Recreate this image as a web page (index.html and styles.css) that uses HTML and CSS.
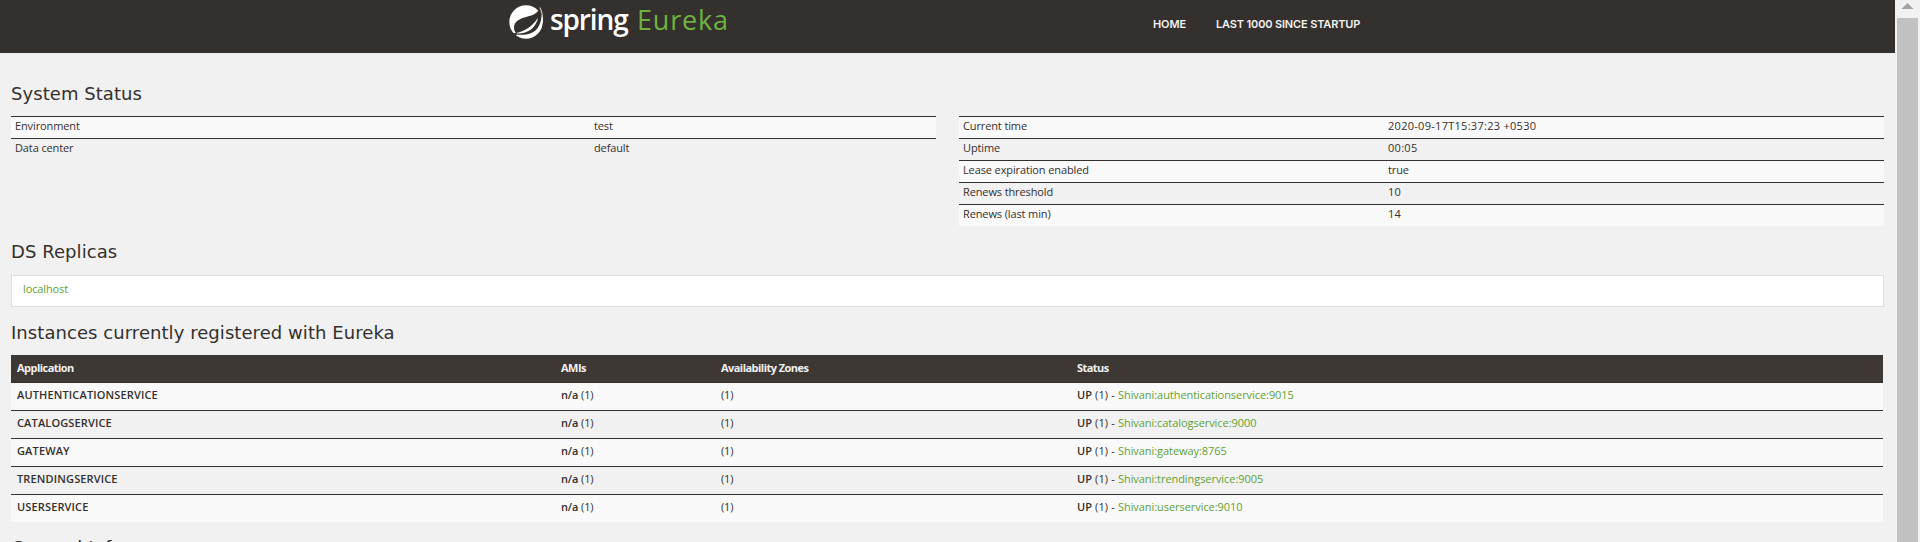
FILE: index.html
```html
<!DOCTYPE html>
<html lang="en">
<head>
<meta charset="utf-8">
<title>Eureka</title>
<link rel="stylesheet" href="styles.css">
</head>
<body>
<div class="page">
  <header class="navbar">
    <a class="brand">
      <svg class="leaf" width="35" height="36" viewBox="0 0 35 36">
        <circle cx="17" cy="17" r="16.700" fill="#fff"/>
        <path fill="#34302d" d="M27 -1H35V5L31.500 5L26.500 2.500Z"/>
        <path fill="#34302d" d="M30.500 3C28.500 8.500 24.500 10.200 18 11.700C10.500 13.500 5 16.500 5 22.500C5 25 5.800 26.600 7 27.800C5.500 27.500 4.300 28.800 5 30C5.800 31 7.300 30.600 7.800 29.600C17 30.600 24.500 28.500 28.500 23.200C33 17 33.300 9.500 31 2Z"/>
        <path fill="#fff" d="M8 27.700C14 26.800 23 22.500 28.800 12.800C28 21 20 29 8 28.600Z"/>
        <path fill="none" stroke="#fff" stroke-width="0.900" d="M30.900 2.500C33.800 9 33.900 14 33.300 18"/>
      </svg>
      <span class="brand-spring">spring</span>
      <span class="brand-eureka">Eureka</span>
    </a>
    <nav class="links"><a>HOME</a><a class="last">LAST 1000 SINCE STARTUP</a></nav>
  </header>
  <main class="content">
    <h1>System Status</h1>
    <div class="status">
      <table class="info env">
        <tr><td class="key">Environment</td><td>test</td></tr>
        <tr><td class="key">Data center</td><td>default</td></tr>
      </table>
      <table class="info runtime">
        <tr><td class="key">Current time</td><td class="num">2020-09-17T15:37:23 +0530</td></tr>
        <tr><td class="key">Uptime</td><td class="num">00:05</td></tr>
        <tr><td class="key">Lease expiration enabled</td><td>true</td></tr>
        <tr><td class="key">Renews threshold</td><td class="num">10</td></tr>
        <tr><td class="key">Renews (last min)</td><td class="num">14</td></tr>
      </table>
    </div>
    <h1>DS Replicas</h1>
    <div class="replicas"><a>localhost</a></div>
    <h1>Instances currently registered with Eureka</h1>
    <table class="apps">
      <thead><tr><th class="c-app">Application</th><th class="c-ami">AMIs</th><th class="c-zone">Availability Zones</th><th>Status</th></tr></thead>
      <tbody>
        <tr><td><b class="name">AUTHENTICATIONSERVICE</b></td><td><b>n/a</b> (1)</td><td>(1)</td><td><span class="up"><b>UP</b> (1) - </span><a>Shivani:authenticationservice:9015</a></td></tr>
        <tr><td><b class="name">CATALOGSERVICE</b></td><td><b>n/a</b> (1)</td><td>(1)</td><td><span class="up"><b>UP</b> (1) - </span><a>Shivani:catalogservice:9000</a></td></tr>
        <tr><td><b class="name">GATEWAY</b></td><td><b>n/a</b> (1)</td><td>(1)</td><td><span class="up"><b>UP</b> (1) - </span><a>Shivani:gateway:8765</a></td></tr>
        <tr><td><b class="name">TRENDINGSERVICE</b></td><td><b>n/a</b> (1)</td><td>(1)</td><td><span class="up"><b>UP</b> (1) - </span><a>Shivani:trendingservice:9005</a></td></tr>
        <tr><td><b class="name">USERSERVICE</b></td><td><b>n/a</b> (1)</td><td>(1)</td><td><span class="up"><b>UP</b> (1) - </span><a>Shivani:userservice:9010</a></td></tr>
      </tbody>
    </table>
    <h1>General Info</h1>
  </main>
</div>
<div class="scrollbar">
  <svg class="arrow" width="21" height="18" viewBox="0 0 21 18"><path fill="#a3a3a3" d="M10.500 3L16.500 9H4.500Z"/></svg>
  <div class="thumb"></div>
</div>
</body>
</html>
```
FILE: styles.css
```css
* { box-sizing: border-box; }
body {
  margin: 0;
  height: 542px;
  overflow: hidden;
  display: flex;
  background: #f1f1f1;
  color: #34302d;
  font: 11px/15px "Open Sans", sans-serif;
  letter-spacing: -0.12px;
}
.page { width: 1895px; height: 542px; overflow: hidden; }
.navbar {
  display: flex;
  height: 53px;
  padding-left: 509px;
  background: #34302d;
}
.brand { display: flex; width: 644px; color: #fff; white-space: nowrap; }
.leaf { margin-top: 5px; }
.brand-spring {
  width: 87px;
  margin-left: 6px;
  font-size: 28px;
  font-weight: 600;
  line-height: 38px;
  letter-spacing: -1.1px;
}
.brand-eureka {
  color: #6db33f;
  font-size: 27px;
  line-height: 40px;
  letter-spacing: 0.8px;
}
.links {
  display: flex;
  gap: 30px;
  color: #f1f1f1;
  font-family: Inter, sans-serif;
  font-weight: 600;
  line-height: 48px;
}
.last { letter-spacing: -0.15px; }
.content { padding: 15px 11px 0; }
h1 {
  margin: 16px 0 12px;
  font: 400 18px/20px "DejaVu Sans", sans-serif;
  letter-spacing: 0.06px;
}
.status { display: flex; justify-content: space-between; align-items: flex-start; }
table { border-collapse: separate; border-spacing: 0; table-layout: fixed; }
.info { width: 925px; }
.info td { padding: 1px 4px 5px; border-top: 1px solid #34302d; }
.env .key { width: 579px; }
.runtime .key { width: 425px; }
.info .num { letter-spacing: 0.28px; }
tr:nth-child(odd) td { background: #f9f9f9; }
.replicas {
  height: 32px;
  width: 1873px;
  margin-top: 13px;
  padding: 5px 11px;
  border: 1px solid #ddd;
  background: #fff;
}
.replicas a, .apps a { color: #5fa134; }
.apps { width: 1872px; }
.apps th {
  padding: 5px 6px 7px;
  background: #3d3833;
  color: #f1f1f1;
  font-weight: 700;
  letter-spacing: -0.54px;
  text-align: left;
}
.apps td { padding: 4px 6px 8px; border-top: 1px solid #34302d; }
.apps td a { letter-spacing: -0.06px; }
.apps b { font-weight: 600; }
.apps .name { letter-spacing: 0.14px; }
.up { display: inline-block; width: 41px; white-space: pre; letter-spacing: 0.1px; }
.c-app { width: 544px; }
.c-ami { width: 160px; }
.c-zone { width: 356px; }
.scrollbar { width: 21px; margin-left: 2px; height: 542px; }
.arrow { display: block; }
.thumb { height: 524px; background: #c1c1c1; }
```
